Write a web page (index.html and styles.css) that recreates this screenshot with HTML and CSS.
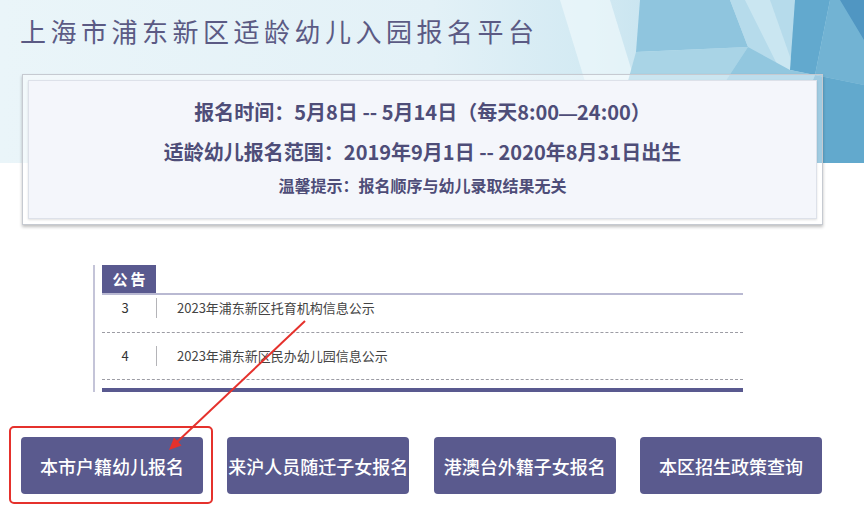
FILE: index.html
```html
<!DOCTYPE html>
<html lang="zh-CN">
<head>
<meta charset="utf-8">
<title>上海市浦东新区适龄幼儿入园报名平台</title>
<link rel="stylesheet" href="styles.css">
</head>
<body>
<div class="page">
  <header class="hero">
    <svg class="hero-bg" width="864" height="163" viewBox="0 0 864 163" aria-hidden="true">
      <defs>
        <linearGradient id="bandGrad" x1="0" y1="0" x2="1" y2="0">
          <stop offset="0" stop-color="#eaf5f9"/>
          <stop offset="0.5" stop-color="#e3f1f7"/>
          <stop offset="0.68" stop-color="#d3eaf3"/>
          <stop offset="1" stop-color="#a8d2e5"/>
        </linearGradient>
      </defs>
      <rect x="0" y="0" width="864" height="163" fill="url(#bandGrad)"/>
      <polygon points="560,0 610,0 660,163 610,163" fill="#eef8fb" opacity="0.7"/>
      <polygon points="640,0 730,0 748,47 636,52" fill="#8fc5de"/>
      <polygon points="636,52 748,47 700,120 620,110" fill="#a9d4e6"/>
      <polygon points="730,0 795,0 790,70 748,47" fill="#b6dbeb"/>
      <polygon points="745,0 770,0 800,85 785,80" fill="#cfe8f2" opacity="0.8"/>
      <polygon points="795,0 830,0 815,75 790,70" fill="#62a9ce"/>
      <polygon points="830,0 864,0 864,85 815,75" fill="#72b3d3"/>
      <polygon points="748,47 790,70 815,75 780,163 700,163 700,120" fill="#92c7df"/>
      <polygon points="815,75 864,85 864,163 780,163" fill="#62a9cd"/>
      <polygon points="660,163 700,120 700,163" fill="#b2d8e9"/>
      <polygon points="840,0 864,0 864,40" fill="#5096c2"/>
    </svg>
    <h1 class="title">上海市浦东新区适龄幼儿入园报名平台</h1>
    <div class="info">
      <div class="info-inner">
        <p class="info-line">报名时间：5月8日 -- 5月14日（每天8:00<span class="dash">—</span>24:00）</p>
        <p class="info-line second">适龄幼儿报名范围：2019年9月1日 -- 2020年8月31日出生</p>
        <p class="info-tip">温馨提示：报名顺序与幼儿录取结果无关</p>
      </div>
    </div>
  </header>

  <section class="notice">
    <div class="notice-tab">公告</div>
    <ul class="notice-list">
      <li class="notice-row first"><span class="num">3</span><span class="sep"></span><span class="ntitle">2023年浦东新区托育机构信息公示</span></li>
      <li class="notice-row"><span class="num">4</span><span class="sep"></span><span class="ntitle">2023年浦东新区民办幼儿园信息公示</span></li>
    </ul>
    <div class="notice-bar"></div>
  </section>

  <nav class="actions">
    <a class="btn">本市户籍幼儿报名</a>
    <a class="btn">来沪人员随迁子女报名</a>
    <a class="btn">港澳台外籍子女报名</a>
    <a class="btn">本区招生政策查询</a>
  </nav>

  <svg class="annot" width="864" height="522" viewBox="0 0 864 522" aria-hidden="true">
    <rect x="10" y="427" width="202" height="76" rx="4" ry="4" fill="none" stroke="#e5312c" stroke-width="2"/>
    <line x1="305" y1="321" x2="177" y2="442" stroke="#e5312c" stroke-width="2"/>
    <polygon points="169,450 181.5,445.6 174,437.6" fill="#e5312c"/>
  </svg>
</div>
</body>
</html>
```

FILE: styles.css
```css
* {
  box-sizing: border-box;
}

html, body {
  margin: 0;
  padding: 0;
  background: #ffffff;
}

body {
  font-family: "Noto Sans CJK SC", "Noto Sans", "Liberation Sans", sans-serif;
  color: #333;
}

.page {
  position: relative;
  width: 864px;
  height: 522px;
  overflow: hidden;
}

/* ---------- header ---------- */
.hero {
  position: relative;
  height: 225px;
}

.hero-bg {
  position: absolute;
  top: 0;
  left: 0;
  z-index: 0;
  display: block;
}

.title {
  position: relative;
  z-index: 1;
  margin: 0;
  padding: 13px 0 0 20px;
  font-size: 26px;
  line-height: 36px;
  font-weight: 400;
  letter-spacing: 4.5px;
  color: #5b5a84;
  white-space: nowrap;
}

.info {
  position: relative;
  z-index: 1;
  margin: 25px 0 0 22px;
  width: 801px;
  height: 151px;
  padding: 5px;
  border: 1px solid #c6cad1;
  background: rgba(255, 255, 255, 0.4);
  box-shadow: 0 2px 3px rgba(0, 0, 0, 0.25);
}

.info-inner {
  height: 139px;
  padding-top: 16px;
  background: #f4f6fb;
  border: 1px solid #dde1e9;
  box-shadow: 0 1px 2px rgba(0, 0, 0, 0.12);
  text-align: center;
  color: #4e4d78;
}

.info-line {
  margin: 0;
  font-size: 20px;
  line-height: 30px;
  font-weight: 700;
  white-space: nowrap;
}

.dash {
  font-family: "Liberation Sans", "Noto Sans", sans-serif;
  font-size: 18px;
}

.info-line.second {
  margin-top: 8px;
}

.info-tip {
  margin: 6px 0 0;
  font-size: 16px;
  line-height: 24px;
  font-weight: 700;
}

/* ---------- notice ---------- */
.notice {
  margin: 40px 0 0 93px;
  width: 650px;
  border-left: 2px solid #c4c4d8;
  padding-left: 7px;
}

.notice-tab {
  width: 54px;
  height: 28px;
  line-height: 28px;
  padding-left: 3px;
  background: #59598f;
  color: #ffffff;
  font-size: 15px;
  font-weight: 700;
  letter-spacing: 3px;
  text-align: center;
}

.notice-list {
  list-style: none;
  margin: 0;
  padding: 0;
  border-top: 2px solid #b9b9d2;
}

.notice-row {
  display: flex;
  align-items: center;
  line-height: 26px;
  padding: 10px 0;
  border-bottom: 1px dashed #9c9ca4;
  font-size: 13px;
}

.notice-row.first {
  padding: 0 0 11px;
}

.num {
  width: 46px;
  text-align: center;
  color: #333;
}

.sep {
  width: 1px;
  height: 20px;
  margin-left: 8px;
  background: #b4b4b8;
}

.ntitle {
  margin-left: 20px;
  color: #444;
}

.notice-bar {
  margin-top: 8px;
  height: 4px;
  background: #59598f;
}

/* ---------- actions ---------- */
.actions {
  display: flex;
  gap: 24.33px;
  margin: 45px 0 0 21px;
}

.btn {
  display: flex;
  align-items: center;
  justify-content: center;
  width: 182px;
  height: 57px;
  border-radius: 4px;
  background: #5a5a8e;
  color: #ffffff;
  font-size: 18px;
  font-weight: 500;
  white-space: nowrap;
  text-decoration: none;
}

/* ---------- annotation overlay ---------- */
.annot {
  position: absolute;
  top: 0;
  left: 0;
  pointer-events: none;
}
```
